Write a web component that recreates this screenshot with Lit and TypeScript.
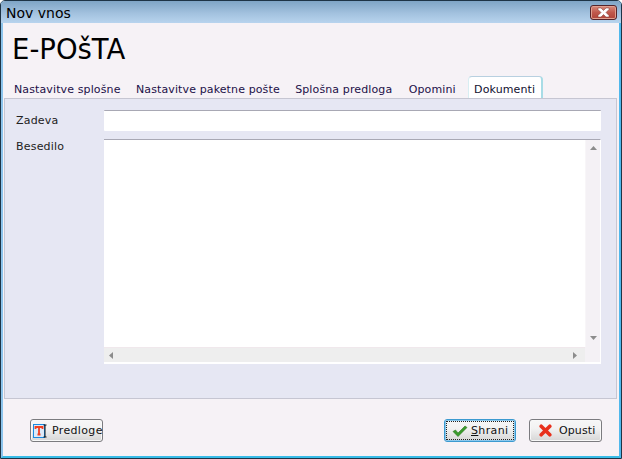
import { LitElement, html, css } from "lit";
import { customElement } from "lit/decorators.js";

@customElement("app-root")
export class AppRoot extends LitElement {
  static styles = css`
    :host { display: block; width: 622px; height: 459px; font-family: "DejaVu Sans", Verdana, sans-serif; font-size: 11px; color: #111; }
    * { box-sizing: border-box; }
    .win { width: 622px; height: 459px; display: flex; flex-direction: column; background: #f6f2f6;
      border: 1px solid #1e3446; border-radius: 5px 5px 0 0; overflow: hidden; }
    .frame { flex: 1; display: flex; flex-direction: column; border: solid #8cc4ec; border-width: 0 2px 2px 2px; border-bottom-color: #38bce8; border-right-color: #50b8ec; min-height: 0; }
    .title { height: 22px; flex: none; margin: 0 -2px; padding: 2px 4px 0 5px; display: flex; justify-content: space-between;
      background: linear-gradient(#7fa5c6, #a2c1de 55%, #b8d4ee); font-size: 14px; line-height: 20px; color: #000; }
    .close { width: 27px; height: 15px; margin-top: 2px; border: 1px solid #55242a; border-radius: 3px; display: flex; align-items: center; justify-content: center;
      background: linear-gradient(#d98b7c, #c0584c 50%, #b04438); box-shadow: inset 0 0 0 1px #e0a090; }
    .head { height: 53px; flex: none; padding: 8px 0 0 9px; font-size: 27.5px; line-height: 36px; color: #000; }
    .tabs { height: 22px; flex: none; display: flex; padding-left: 6px; position: relative; z-index: 1; color: #1c1048; }
    .tab { padding: 6px 5px 0; margin-right: 5.4px; line-height: 15px; white-space: nowrap; letter-spacing: 0.12px; }
    .tab.third { margin-right: 6.4px; }
    .tab.a { background: #fff; border: 1px solid #c6d6e6; border-bottom: 0; border-right: 2px solid #a8dce6; border-left-color: #d8eef2; border-top-color: #b8d0e0; border-radius: 4px 4px 0 0; margin: 0 0 0 2px; padding: 5px 6px 0 5px; height: 22px; color: #111030; }
    .panel { height: 301px; flex: none; margin: 0 2px 0 1px; background: #e6e7f3; border: 1px solid #c6c6d2; padding: 11px 15px 0 2px; display: flex; flex-direction: column; gap: 8px; }
    .row { display: flex; }
    .lab { width: 97px; padding: 3px 0 0 9px; letter-spacing: 0.2px; color: #222; flex: none; line-height: 15px; }
    .lab.t { padding-top: 0; }
    .input { flex: 1; height: 21px; background: #fff; border-top: 1px solid #a8a8b4; border-radius: 1px; }
    .area { flex: 1; height: 225px; background: #fff; border-top: 1px solid #a8a8b4; border-right: 1px solid #fff; border-bottom: 2px solid #fff; display: grid; grid-template-columns: 1fr 15px; grid-template-rows: 1fr 15px; }
    .sv { background: #f4f1f5; border-left: 1px solid #f8f6f8; display: flex; flex-direction: column; justify-content: space-between; align-items: center; padding: 6px 0 7px; }
    .sh { background: #eeeeee; display: flex; justify-content: space-between; align-items: center; padding: 0 8px 0 5px; border-top: 1px solid #f0e8ec; }
    .corner { background: #f4f1f5; }
    .foot { flex: 1; display: flex; align-items: flex-start; padding: 20px 17px 0 27px; gap: 13px; min-height: 0; }
    .spacer { flex: 1; }
    .btn { height: 23px; border: 1px solid #7b7b7f; border-radius: 3px; background: linear-gradient(#f7f7f7, #f2f2f2 40%, #d6d6d6); display: flex; align-items: center; padding: 0 0 0 2px; gap: 5px; letter-spacing: 0.35px; line-height: 15px; color: #111; box-shadow: inset 0 0 0 1px #f8f8f8; white-space: nowrap; }
    .btn svg { flex: none; }
    .p { width: 73px; }
    .s { width: 72px; border-color: #3c9ad0; box-shadow: inset 0 0 0 1px #8cc8ec; padding-left: 7px; gap: 3px; position: relative; }
    .s::after { content: ""; position: absolute; inset: 1px; border: 1px dotted #222; }
    .o { width: 73px; padding-left: 9px; gap: 7px; letter-spacing: 0.1px; }
    u { text-decoration: underline; }
  `;

  render() {
    return html`<div class="win"><div class="frame">
      <div class="title"><span>Nov vnos</span>
        <span class="close"><svg width="15" height="11" viewBox="0 0 15 11"><path d="M2 1h3l2.500 2.500L10 1h3v1.500L10 5.500l3 3V10h-3L7.500 7.500 5 10H2V8.500l3-3-3-3z" fill="#fff" stroke="#7a3a34" stroke-width=".5"/></svg></span>
      </div>
      <div class="head">E-POšTA</div>
      <div class="tabs">
        <div class="tab">Nastavitve splošne</div>
        <div class="tab">Nastavitve paketne pošte</div>
        <div class="tab third">Splošna predloga</div>
        <div class="tab">Opomini</div>
        <div class="tab a">Dokumenti</div>
      </div>
      <div class="panel">
        <div class="row"><div class="lab">Zadeva</div><div class="input"></div></div>
        <div class="row"><div class="lab t">Besedilo</div>
          <div class="area"><div></div>
            <div class="sv">
              <svg width="7" height="4" viewBox="0 0 7 4"><path d="M3.500 0L7 4H0z" fill="#8c8c8c"/></svg>
              <svg width="7" height="4" viewBox="0 0 7 4"><path d="M3.500 4L7 0H0z" fill="#8c8c8c"/></svg>
            </div>
            <div class="sh">
              <svg width="4" height="7" viewBox="0 0 4 7"><path d="M0 3.500L4 0V7z" fill="#8c8c8c"/></svg>
              <svg width="4" height="7" viewBox="0 0 4 7"><path d="M4 3.500L0 0V7z" fill="#8c8c8c"/></svg>
            </div>
            <div class="corner"></div>
          </div>
        </div>
      </div>
      <div class="foot">
        <div class="btn p">
          <svg width="14" height="16" viewBox="0 0 14 16"><rect x=".5" y="1.500" width="11" height="13" fill="#dceaf8" stroke="#1a8ae0"/><path d="M2.500 6V4h7v2M6 4v8M4.500 11.500h3" fill="none" stroke="#f04020" stroke-width="1.800"/><path d="M10.500 2h3M10.500 14h3M12 2v12" stroke="#111" stroke-width="1" fill="none"/></svg>
          <span>Predloge</span>
        </div>
        <div class="spacer"></div>
        <div class="btn s">
          <svg width="16" height="12" viewBox="0 0 16 12"><path d="M1 6.500L3.500 5 6 8 13 1l2 1.500L6 11.500z" fill="#3a9a2c" stroke="#2a7a20" stroke-width=".6"/></svg>
          <span><u>S</u>hrani</span>
        </div>
        <div class="btn o">
          <svg width="13" height="13" viewBox="0 0 13 13"><path d="M2.200 2.200l8.600 8.600M10.800 2.200l-8.600 8.600" stroke="#e8301c" stroke-width="3.600" stroke-linecap="round"/></svg>
          <span>Opusti</span>
        </div>
      </div>
    </div></div>`;
  }
}
